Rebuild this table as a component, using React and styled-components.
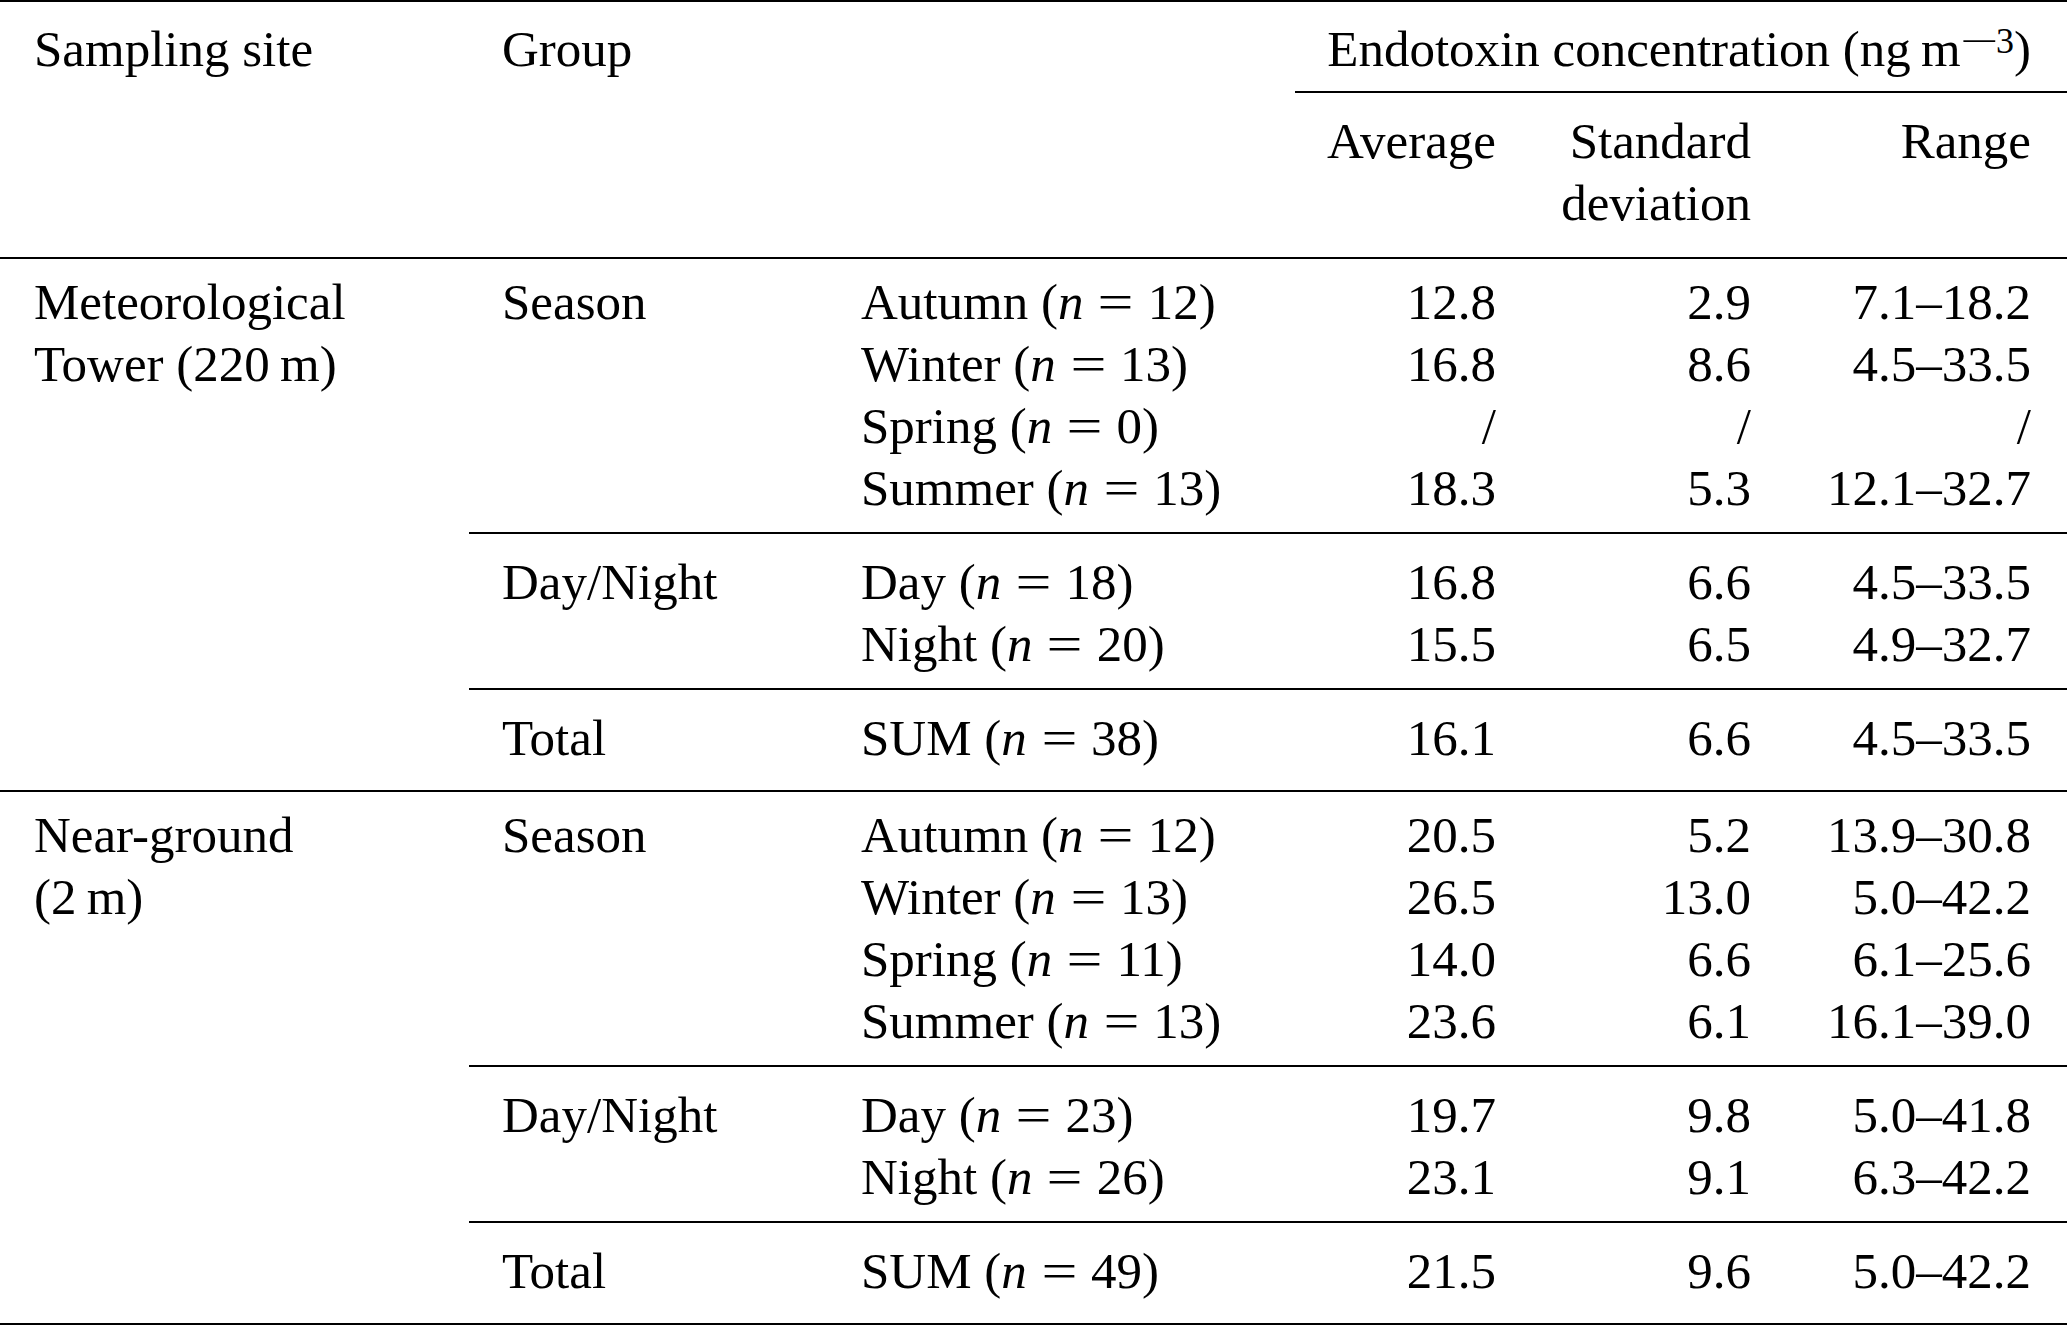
import React from 'react'
import styled, { createGlobalStyle } from 'styled-components'

const GlobalStyle = createGlobalStyle`
  html, body {
    margin: 0;
    padding: 0;
    background: #fff;
  }
  body {
    font-family: "Liberation Serif", "Times New Roman", serif;
    color: #000;
  }
`

const sites = [
  {
    name: ['Meteorological', 'Tower (220\u2009m)'],
    groups: [
      {
        name: 'Season',
        rows: [
          ['Autumn', 12, '12.8', '2.9', '7.1–18.2'],
          ['Winter', 13, '16.8', '8.6', '4.5–33.5'],
          ['Spring', 0, '/', '/', '/'],
          ['Summer', 13, '18.3', '5.3', '12.1–32.7'],
        ],
      },
      {
        name: 'Day/Night',
        rows: [
          ['Day', 18, '16.8', '6.6', '4.5–33.5'],
          ['Night', 20, '15.5', '6.5', '4.9–32.7'],
        ],
      },
      {
        name: 'Total',
        rows: [['SUM', 38, '16.1', '6.6', '4.5–33.5']],
      },
    ],
  },
  {
    name: ['Near-ground', '(2\u2009m)'],
    groups: [
      {
        name: 'Season',
        rows: [
          ['Autumn', 12, '20.5', '5.2', '13.9–30.8'],
          ['Winter', 13, '26.5', '13.0', '5.0–42.2'],
          ['Spring', 11, '14.0', '6.6', '6.1–25.6'],
          ['Summer', 13, '23.6', '6.1', '16.1–39.0'],
        ],
      },
      {
        name: 'Day/Night',
        rows: [
          ['Day', 23, '19.7', '9.8', '5.0–41.8'],
          ['Night', 26, '23.1', '9.1', '6.3–42.2'],
        ],
      },
      {
        name: 'Total',
        rows: [['SUM', 49, '21.5', '9.6', '5.0–42.2']],
      },
    ],
  },
]

function App() {
  return (
    <>
      <GlobalStyle />
      <Table>
        <Header>
          <HeadCell>Sampling site</HeadCell>
          <HeadCell $pad="33px">Group</HeadCell>
          <HeadCell />
          <SpanCell>
            Endotoxin concentration (ng{'\u2009'}m
            <Sup>
              <Minus>{'\u2212'}</Minus>3
            </Sup>
            )
          </SpanCell>
          <HeadCell />
          <HeadCell />
          <HeadCell />
          <SubHead>Average</SubHead>
          <SubHead>
            Standard
            <br />
            deviation
          </SubHead>
          <SubHead $last>Range</SubHead>
        </Header>

        {sites.map((site) => (
          <Site key={site.name[0]}>
            <SiteName>
              {site.name.map((line) => (
                <div key={line}>{line}</div>
              ))}
            </SiteName>
            <Groups>
              {site.groups.map((group, gi) => (
                <Group
                  key={group.name}
                  $first={gi === 0}
                  $last={gi === site.groups.length - 1}
                >
                  <GroupName>{group.name}</GroupName>
                  <Rows>
                    {group.rows.map(([label, n, avg, sd, range]) => (
                      <Row key={label}>
                        <Label>
                          {label} (<Em>n</Em> <Eq>=</Eq> {n})
                        </Label>
                        <Num>{avg}</Num>
                        <Num>{sd}</Num>
                        <Num $last>{range}</Num>
                      </Row>
                    ))}
                  </Rows>
                </Group>
              ))}
            </Groups>
          </Site>
        ))}
      </Table>
    </>
  )
}

export default App

const LINE = '62px'

const Table = styled.div`
  width: 2067px;
  border-top: 2px solid #000;
  font-size: 51px;
  line-height: ${LINE};
`

const Header = styled.div`
  display: grid;
  grid-template-columns: 469px 358px 468px 235px 255px 1fr;
  border-bottom: 2px solid #000;
`

const HeadCell = styled.div`
  padding: 16px 0 11px ${(p) => p.$pad || '34px'};
  white-space: nowrap;
`

const SpanCell = styled.div`
  grid-column: 4 / span 3;
  padding: 16px 36px 11px 0;
  border-bottom: 2px solid #000;
  white-space: nowrap;
  text-align: right;
`

const Sup = styled.sup`
  font-size: 36px;
  line-height: 0;
  vertical-align: 13px;
`

const Minus = styled.span`
  display: inline-block;
  transform: scaleX(1.9);
  margin: 0 7px 0 8px;
`

const SubHead = styled.div`
  padding: 17px ${(p) => (p.$last ? '36px' : '34px')} 23px 0;
  text-align: right;
  white-space: nowrap;
`

const Site = styled.div`
  display: flex;
  border-bottom: 2px solid #000;
`

const SiteName = styled.div`
  width: 469px;
  flex-shrink: 0;
  box-sizing: border-box;
  padding: 12px 0 0 34px;
  white-space: nowrap;
`

const Groups = styled.div`
  flex: 1;
  display: flex;
  flex-direction: column;
`

const Group = styled.div`
  display: flex;
  border-top: ${(p) => (p.$first ? 'none' : '2px solid #000')};
  padding-top: ${(p) => (p.$first ? '12px' : '17px')};
  padding-bottom: ${(p) => (p.$last ? '21px' : '13px')};
`

const GroupName = styled.div`
  width: 358px;
  flex-shrink: 0;
  box-sizing: border-box;
  padding-left: 33px;
  white-space: nowrap;
`

const Rows = styled.div`
  flex: 1;
  display: flex;
  flex-direction: column;
`

const Row = styled.div`
  display: grid;
  grid-template-columns: 468px 235px 255px 1fr;
  height: ${LINE};
`

const Label = styled.div`
  padding-left: 34px;
  white-space: nowrap;
`

const Em = styled.i`
  font-style: italic;
`

const Eq = styled.span`
  display: inline-block;
  transform: scaleX(1.25);
  margin: 0 5px;
`

const Num = styled.div`
  text-align: right;
  padding-right: ${(p) => (p.$last ? '36px' : '34px')};
  white-space: nowrap;
`
